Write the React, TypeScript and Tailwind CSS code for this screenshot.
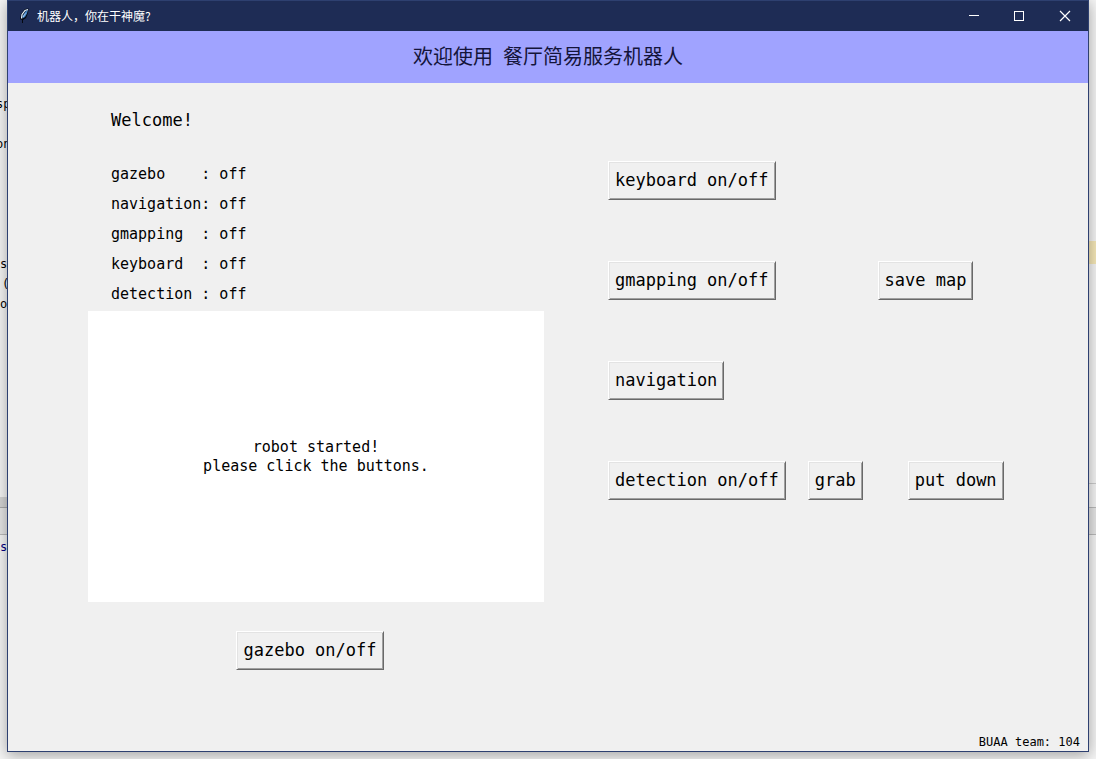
import React from "react";

const MONO = "font-['DejaVu_Sans_Mono','Noto_Sans_CJK_SC',monospace]";

type BevelButtonProps = { children: React.ReactNode; className?: string };

function BevelButton({ children, className = "" }: BevelButtonProps) {
  return (
    <button
      type="button"
      className={`h-[39px] shrink-0 whitespace-pre border border-t-white border-l-white border-r-[#696969] border-b-[#696969] bg-[#f0f0f0] px-1.5 text-[17px] leading-none text-black shadow-[inset_1px_1px_0_#e3e3e3,inset_-1px_-1px_0_#a0a0a0] ${className}`}
    >
      {children}
    </button>
  );
}

function Feather() {
  return (
    <svg viewBox="0 0 16 16" className="size-4" aria-hidden="true">
      <path d="M12.500 0.500 9 1 5 6 4 11l2 1v3h1v-3l3-2 2-5Z" fill="#04070f" />
      <path d="M12 1.500 9.500 3.500 6.500 8v2.500L9 9l2-3.500Z" fill="#4583c4" />
      <path d="M12 1.500 9 2.500 6 6.500 5.500 10.500" fill="none" stroke="#e4f2ff" strokeWidth="1.200" />
      <path d="M9.500 5.500 7 9" fill="none" stroke="#b9dcff" strokeWidth="0.800" />
    </svg>
  );
}

function TitleBar() {
  const control = "flex h-full w-[46px] items-center justify-center text-white";
  return (
    <header className="flex h-[30px] items-center bg-[#1e2c55] pl-2 font-['Noto_Sans_CJK_SC',sans-serif] text-white">
      <Feather />
      <span className="grow pl-[5px] text-[12px] leading-none">机器人，你在干神魔?</span>
      <button type="button" aria-label="Minimize" className={control}>
        <svg viewBox="0 0 12 12" className="size-3" shapeRendering="crispEdges">
          <path d="M2 5.500h10" stroke="currentColor" />
        </svg>
      </button>
      <button type="button" aria-label="Maximize" className={control}>
        <svg viewBox="0 0 12 12" className="size-3" shapeRendering="crispEdges">
          <path d="M1.500 1.500h9v9h-9Z" fill="none" stroke="currentColor" />
        </svg>
      </button>
      <button type="button" aria-label="Close" className={control}>
        <svg viewBox="0 0 12 12" className="size-3">
          <path d="m1 1 10 10M11 1 1 11" stroke="currentColor" strokeWidth="1.200" />
        </svg>
      </button>
    </header>
  );
}

const STATUS = [
  ["gazebo", "off"],
  ["navigation", "off"],
  ["gmapping", "off"],
  ["keyboard", "off"],
  ["detection", "off"],
];

export default function App() {
  return (
    <div className={`flex h-screen min-h-[752px] overflow-hidden bg-[#f5f5f5] text-black ${MONO}`}>
      <div className="flex w-[7px] shrink-0 flex-col items-start overflow-hidden whitespace-pre text-[12px] leading-5">
        <span className="-ml-1 mt-[94px]">sp</span>
        <span className="-ml-1 mt-5">on</span>
        <span className="mt-[100px]">s</span>
        <span className="ml-0.5">(</span>
        <span>o</span>
        <div className="mt-[183px] h-[11px] w-full shrink-0 border-b border-[#aaa] bg-[#d4d4d4]" />
        <div className="h-[27px] w-full shrink-0 border-b border-[#bbb] bg-[#e6e6e6]" />
        <span className="mt-[2px] text-[#000080]">s</span>
      </div>

      <main className="relative mb-[7px] flex min-w-0 grow flex-col border border-[#2e4070] bg-[#f0f0f0] shadow-[0_3px_14px_rgba(0,0,0,0.35)]">
        <TitleBar />
        <h1 className="flex h-[52px] shrink-0 items-center justify-center whitespace-pre bg-[#a0a3ff] pb-0.5 font-['Noto_Sans_Mono_CJK_SC','Noto_Sans_CJK_SC',sans-serif] text-[20px] font-light leading-none text-[#14143a]">
          欢迎使用 餐厅简易服务机器人
        </h1>

        <div className="grid grow grid-cols-[456fr_400fr] gap-16 px-20">
          <section className="flex flex-col">
            <p className="mt-[27px] pl-[23px] text-[17px] leading-5">Welcome!</p>
            <ul className="mt-[29px] pl-[23px] text-[15px] leading-[30px]">
              {STATUS.map(([name, state]) => (
                <li key={name} className="whitespace-pre">
                  {`${name.padEnd(10)}: ${state}`}
                </li>
              ))}
            </ul>
            <div className="mt-[2px] flex h-[291px] items-center justify-center bg-white text-center text-[15px] leading-[19px]">
              <p>
                robot started!
                <br />
                please click the buttons.
              </p>
            </div>
            <div className="mt-[29px] flex justify-center pr-3">
              <BevelButton>gazebo on/off</BevelButton>
            </div>
          </section>

          <section className="flex flex-col gap-[61px] pt-[78px]">
            <div className="flex">
              <BevelButton>keyboard on/off</BevelButton>
            </div>
            <div className="flex gap-[102px]">
              <BevelButton>gmapping on/off</BevelButton>
              <BevelButton>save map</BevelButton>
            </div>
            <div className="flex">
              <BevelButton>navigation</BevelButton>
            </div>
            <div className="flex">
              <BevelButton>detection on/off</BevelButton>
              <BevelButton className="ml-[22px]">grab</BevelButton>
              <BevelButton className="ml-[45px]">put down</BevelButton>
            </div>
          </section>
        </div>

        <footer className="pr-2 pb-[3px] text-right text-[12px] leading-3">BUAA team: 104</footer>
      </main>

      <div className="flex w-[7px] shrink-0 flex-col">
        <div className="mt-[241px] h-[23px] bg-[#f6e8b8]" />
        <div className="mt-[219px] h-6 border-t border-[#ccc]" />
        <div className="h-7 border-y border-[#bbb] bg-[#e6e6e6]" />
      </div>
    </div>
  );
}
